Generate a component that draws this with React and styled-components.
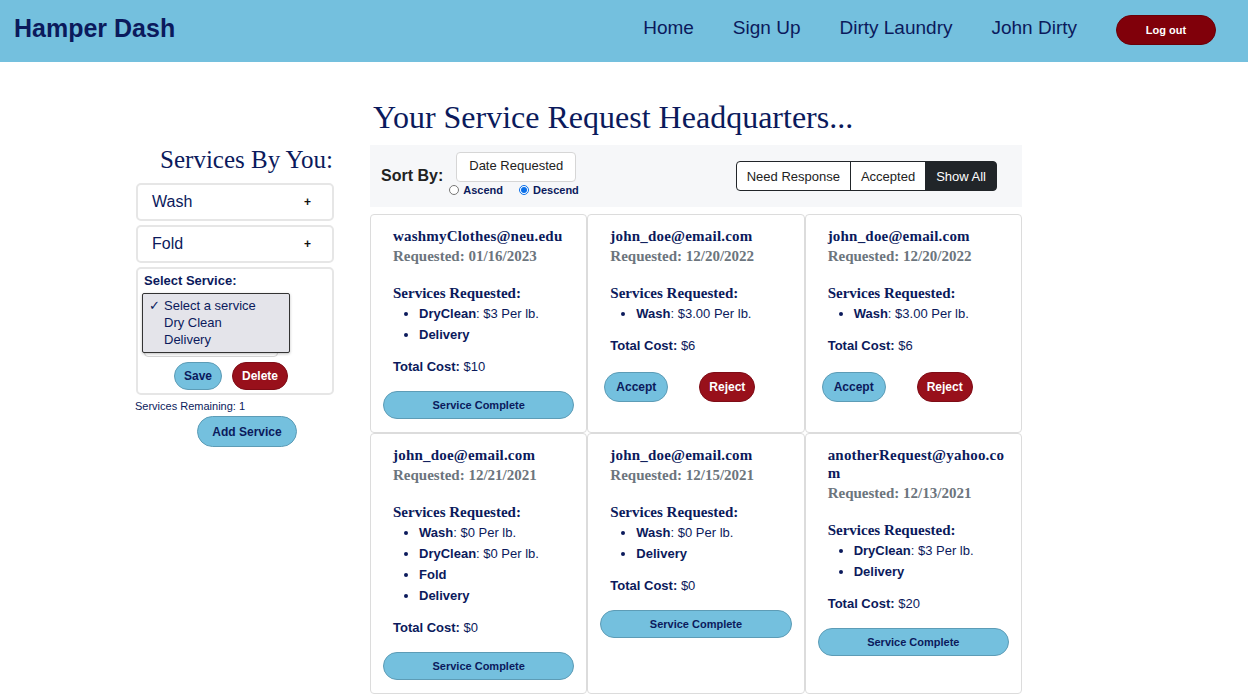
import React from "react";
import styled, { createGlobalStyle } from "styled-components";

const navy = "#0b1a5c";
const sky = "#74c0de";

const GlobalStyle = createGlobalStyle`
  body {
    margin: 0;
    background: #fff;
    font-family: "Liberation Sans", Arial, sans-serif;
    color: ${navy};
  }
  * { box-sizing: border-box; }
`;

const requests = [
  {
    email: "washmyClothes@neu.edu",
    date: "01/16/2023",
    items: [{ name: "DryClean", price: "$3 Per lb." }, { name: "Delivery" }],
    total: "$10",
    status: "accepted",
  },
  {
    email: "john_doe@email.com",
    date: "12/20/2022",
    items: [{ name: "Wash", price: "$3.00 Per lb." }],
    total: "$6",
    status: "pending",
  },
  {
    email: "john_doe@email.com",
    date: "12/20/2022",
    items: [{ name: "Wash", price: "$3.00 Per lb." }],
    total: "$6",
    status: "pending",
  },
  {
    email: "john_doe@email.com",
    date: "12/21/2021",
    items: [
      { name: "Wash", price: "$0 Per lb." },
      { name: "DryClean", price: "$0 Per lb." },
      { name: "Fold" },
      { name: "Delivery" },
    ],
    total: "$0",
    status: "accepted",
  },
  {
    email: "john_doe@email.com",
    date: "12/15/2021",
    items: [{ name: "Wash", price: "$0 Per lb." }, { name: "Delivery" }],
    total: "$0",
    status: "accepted",
  },
  {
    email: "anotherRequest@yahoo.com",
    date: "12/13/2021",
    items: [{ name: "DryClean", price: "$3 Per lb." }, { name: "Delivery" }],
    total: "$20",
    status: "accepted",
  },
];

const App = () => {
  return (
    <>
      <GlobalStyle />
      <Header>
        <Brand>Hamper Dash</Brand>
        <Nav>
          <NavLink>Home</NavLink>
          <NavLink>Sign Up</NavLink>
          <NavLink>Dirty Laundry</NavLink>
          <NavLink>John Dirty</NavLink>
          <LogoutButton>Log out</LogoutButton>
        </Nav>
      </Header>

      <Main>
        <Sidebar>
          <SideTitle>Services By You:</SideTitle>
          <AccordionItem>
            <span>Wash</span>
            <Plus>+</Plus>
          </AccordionItem>
          <AccordionItem>
            <span>Fold</span>
            <Plus>+</Plus>
          </AccordionItem>
          <ServiceForm>
            <FormLabel>Select Service:</FormLabel>
            <SelectBox />
            <Dropdown>
              <Option>
                <Check>✓</Check>Select a service
              </Option>
              <Option>
                <Check />
                Dry Clean
              </Option>
              <Option>
                <Check />
                Delivery
              </Option>
            </Dropdown>
            <FormActions>
              <PillButton $variant="blue" $w={48}>
                Save
              </PillButton>
              <PillButton $variant="red" $w={56}>
                Delete
              </PillButton>
            </FormActions>
          </ServiceForm>
          <Remaining>Services Remaining: 1</Remaining>
          <AddButton>Add Service</AddButton>
        </Sidebar>

        <Content>
          <PageTitle>Your Service Request Headquarters...</PageTitle>
          <SortBar>
            <SortLabel>Sort By:</SortLabel>
            <SortColumn>
              <SortButton>Date Requested</SortButton>
              <RadioRow>
                <RadioLabel>
                  <Radio type="radio" name="order" readOnly />
                  Ascend
                </RadioLabel>
                <RadioLabel>
                  <Radio type="radio" name="order" defaultChecked />
                  Descend
                </RadioLabel>
              </RadioRow>
            </SortColumn>
            <FilterGroup>
              <FilterButton>Need Response</FilterButton>
              <FilterButton>Accepted</FilterButton>
              <FilterButton $active>Show All</FilterButton>
            </FilterGroup>
          </SortBar>

          <CardGrid>
            {requests.map((r, i) => (
              <Card key={i}>
                <CardBody>
                  <Email>{r.email}</Email>
                  <Requested>Requested: {r.date}</Requested>
                  <ServicesHeading>Services Requested:</ServicesHeading>
                  <ServiceList>
                    {r.items.map((it) => (
                      <li key={it.name}>
                        <b>{it.name}</b>
                        {it.price ? `: ${it.price}` : ""}
                      </li>
                    ))}
                  </ServiceList>
                  <Total>
                    <b>Total Cost:</b> {r.total}
                  </Total>
                </CardBody>
                {r.status === "pending" ? (
                  <ActionRow>
                    <PillButton $variant="blue" $w={64} $h={30}>
                      Accept
                    </PillButton>
                    <PillButton $variant="red" $w={56} $h={30}>
                      Reject
                    </PillButton>
                  </ActionRow>
                ) : (
                  <CompleteButton>Service Complete</CompleteButton>
                )}
              </Card>
            ))}
          </CardGrid>
        </Content>
      </Main>
    </>
  );
};

const Header = styled.header`
  height: 62px;
  background: ${sky};
  display: flex;
  align-items: center;
  padding: 0 32px 0 14px;
`;

const Brand = styled.div`
  font-size: 25px;
  font-weight: bold;
  color: ${navy};
  margin-top: -5px;
`;

const Nav = styled.nav`
  margin-left: auto;
  display: flex;
  align-items: center;
  gap: 39px;
`;

const NavLink = styled.a`
  font-size: 19px;
  color: ${navy};
  margin-top: -6px;
  cursor: pointer;
`;

const LogoutButton = styled.button`
  width: 100px;
  height: 30px;
  border-radius: 15px;
  border: 1px solid #6a0008;
  background: #80000a;
  color: #fff;
  font-family: "Liberation Sans", Arial, sans-serif;
  font-size: 11px;
  font-weight: bold;
  margin-top: -2px;
`;

const Main = styled.main`
  display: flex;
  gap: 35px;
  padding-left: 135px;
`;

const Sidebar = styled.aside`
  width: 200px;
  padding-top: 83px;
  display: flex;
  flex-direction: column;
`;

const SideTitle = styled.h2`
  margin: 0 2px 8px 0;
  text-align: right;
  font-family: "Liberation Serif", "Times New Roman", serif;
  font-weight: normal;
  font-size: 25px;
  line-height: 30px;
  color: ${navy};
`;

const AccordionItem = styled.div`
  margin: 0 1px 4px;
  height: 38px;
  border: 2px solid #e6e6e6;
  border-radius: 5px;
  display: flex;
  align-items: center;
  justify-content: space-between;
  padding: 0 21px 0 14px;
  font-size: 16px;
  color: ${navy};
`;

const Plus = styled.span`
  font-size: 12px;
  font-weight: bold;
  color: #111;
`;

const ServiceForm = styled.div`
  position: relative;
  margin: 0 1px;
  border: 2px solid #e6e6e6;
  border-radius: 5px;
  padding: 4px 6px 3px;
`;

const FormLabel = styled.div`
  font-size: 13px;
  font-weight: bold;
  line-height: 16px;
  color: ${navy};
`;

const SelectBox = styled.div`
  margin-top: 4px;
  width: 134px;
  height: 64px;
  border: 1px solid #d4d4d4;
  border-radius: 4px;
  background: #fff;
`;

const Dropdown = styled.div`
  position: absolute;
  left: 4px;
  top: 24px;
  width: 148px;
  height: 60px;
  background: #e4e4ea;
  border: 1px solid #333;
  border-radius: 2px;
  padding-top: 3px;
  box-shadow: 0 1px 3px rgba(0, 0, 0, 0.25);
`;

const Option = styled.div`
  display: flex;
  font-size: 13px;
  line-height: 17px;
  color: ${navy};
`;

const Check = styled.span`
  width: 21px;
  padding-left: 6px;
`;

const FormActions = styled.div`
  display: flex;
  justify-content: center;
  gap: 10px;
  margin-top: 5px;
  padding-right: 8px;
`;

const PillButton = styled.button`
  width: ${(p) => p.$w}px;
  height: ${(p) => p.$h || 28}px;
  border-radius: 15px;
  font-family: "Liberation Sans", Arial, sans-serif;
  font-size: 12px;
  font-weight: bold;
  padding: 0;
  background: ${(p) => (p.$variant === "red" ? "#98101b" : sky)};
  color: ${(p) => (p.$variant === "red" ? "#fff" : navy)};
  border: 1px solid ${(p) => (p.$variant === "red" ? "#7e0c16" : "#5d9cb6")};
`;

const Remaining = styled.div`
  margin-top: 4px;
  font-size: 11px;
  line-height: 14px;
  color: ${navy};
`;

const AddButton = styled.button`
  margin: 3px 0 0 62px;
  width: 100px;
  height: 31px;
  border-radius: 16px;
  background: ${sky};
  border: 1px solid #5d9cb6;
  color: ${navy};
  font-family: "Liberation Sans", Arial, sans-serif;
  font-size: 12px;
  font-weight: bold;
`;

const Content = styled.section`
  width: 652px;
  padding-top: 36px;
`;

const PageTitle = styled.h1`
  margin: 0 0 9px 3px;
  font-family: "Liberation Serif", "Times New Roman", serif;
  font-weight: normal;
  font-size: 32px;
  line-height: 38px;
  color: ${navy};
`;

const SortBar = styled.div`
  height: 62px;
  background: #f6f7f9;
  display: flex;
  align-items: center;
  padding: 0 25px 0 11px;
`;

const SortLabel = styled.div`
  font-size: 16px;
  font-weight: bold;
  color: #222;
  margin-right: 6px;
`;

const SortColumn = styled.div`
  align-self: flex-start;
  padding-top: 7px;
  display: flex;
  flex-direction: column;
  align-items: flex-start;
`;

const SortButton = styled.button`
  margin-left: 7px;
  width: 120px;
  height: 30px;
  background: #fff;
  border: 1px solid #d6d6d6;
  border-radius: 4px;
  font-family: "Liberation Sans", Arial, sans-serif;
  font-size: 13px;
  color: #222;
  padding: 0 0 4px;
`;

const RadioRow = styled.div`
  display: flex;
  gap: 16px;
  margin-top: 2px;
`;

const RadioLabel = styled.label`
  display: flex;
  align-items: center;
  font-size: 11px;
  font-weight: bold;
  color: ${navy};
`;

const Radio = styled.input`
  width: 10px;
  height: 10px;
  margin: 0 4px 0 0;
  accent-color: #0a6fe8;
`;

const FilterGroup = styled.div`
  margin-left: auto;
  display: flex;
`;

const FilterButton = styled.button`
  height: 30px;
  padding: 0 10px;
  font-family: "Liberation Sans", Arial, sans-serif;
  font-size: 13px;
  background: ${(p) => (p.$active ? "#212529" : "#fff")};
  color: ${(p) => (p.$active ? "#fff" : "#222")};
  border: 1px solid #212529;
  margin-left: -1px;
  border-radius: 0;
  &:first-child {
    border-radius: 4px 0 0 4px;
  }
  &:last-child {
    border-radius: 0 4px 4px 0;
  }
`;

const CardGrid = styled.div`
  margin-top: 7px;
  display: grid;
  grid-template-columns: repeat(3, 1fr);
`;

const Card = styled.article`
  border: 1px solid #dcdcdc;
  border-radius: 4px;
  padding: 12px 12px 13px;
  display: flex;
  flex-direction: column;
`;

const CardBody = styled.div`
  padding-left: 10px;
`;

const serif = `"Liberation Serif", "Times New Roman", serif`;

const Email = styled.div`
  font-family: ${serif};
  font-weight: bold;
  font-size: 15px;
  line-height: 18px;
  letter-spacing: 0.2px;
  word-break: break-all;
  color: ${navy};
`;

const Requested = styled.div`
  font-family: ${serif};
  font-weight: bold;
  font-size: 15px;
  line-height: 22px;
  color: #6c757d;
`;

const ServicesHeading = styled.div`
  margin-top: 16px;
  font-family: ${serif};
  font-weight: bold;
  font-size: 15px;
  line-height: 20px;
  color: ${navy};
`;

const ServiceList = styled.ul`
  margin: 0;
  padding-left: 26px;
  font-size: 13px;
  line-height: 21px;
  color: ${navy};
`;

const Total = styled.div`
  margin-top: 12px;
  font-size: 13px;
  line-height: 20px;
  color: ${navy};
`;

const ActionRow = styled.div`
  margin-top: 16px;
  display: flex;
  gap: 31px;
  padding-left: 4px;
`;

const CompleteButton = styled.button`
  margin-top: 14px;
  width: 100%;
  height: 28px;
  border-radius: 14px;
  background: ${sky};
  border: 1px solid #5d9cb6;
  color: ${navy};
  font-family: "Liberation Sans", Arial, sans-serif;
  font-size: 11px;
  font-weight: bold;
`;

export default App;
